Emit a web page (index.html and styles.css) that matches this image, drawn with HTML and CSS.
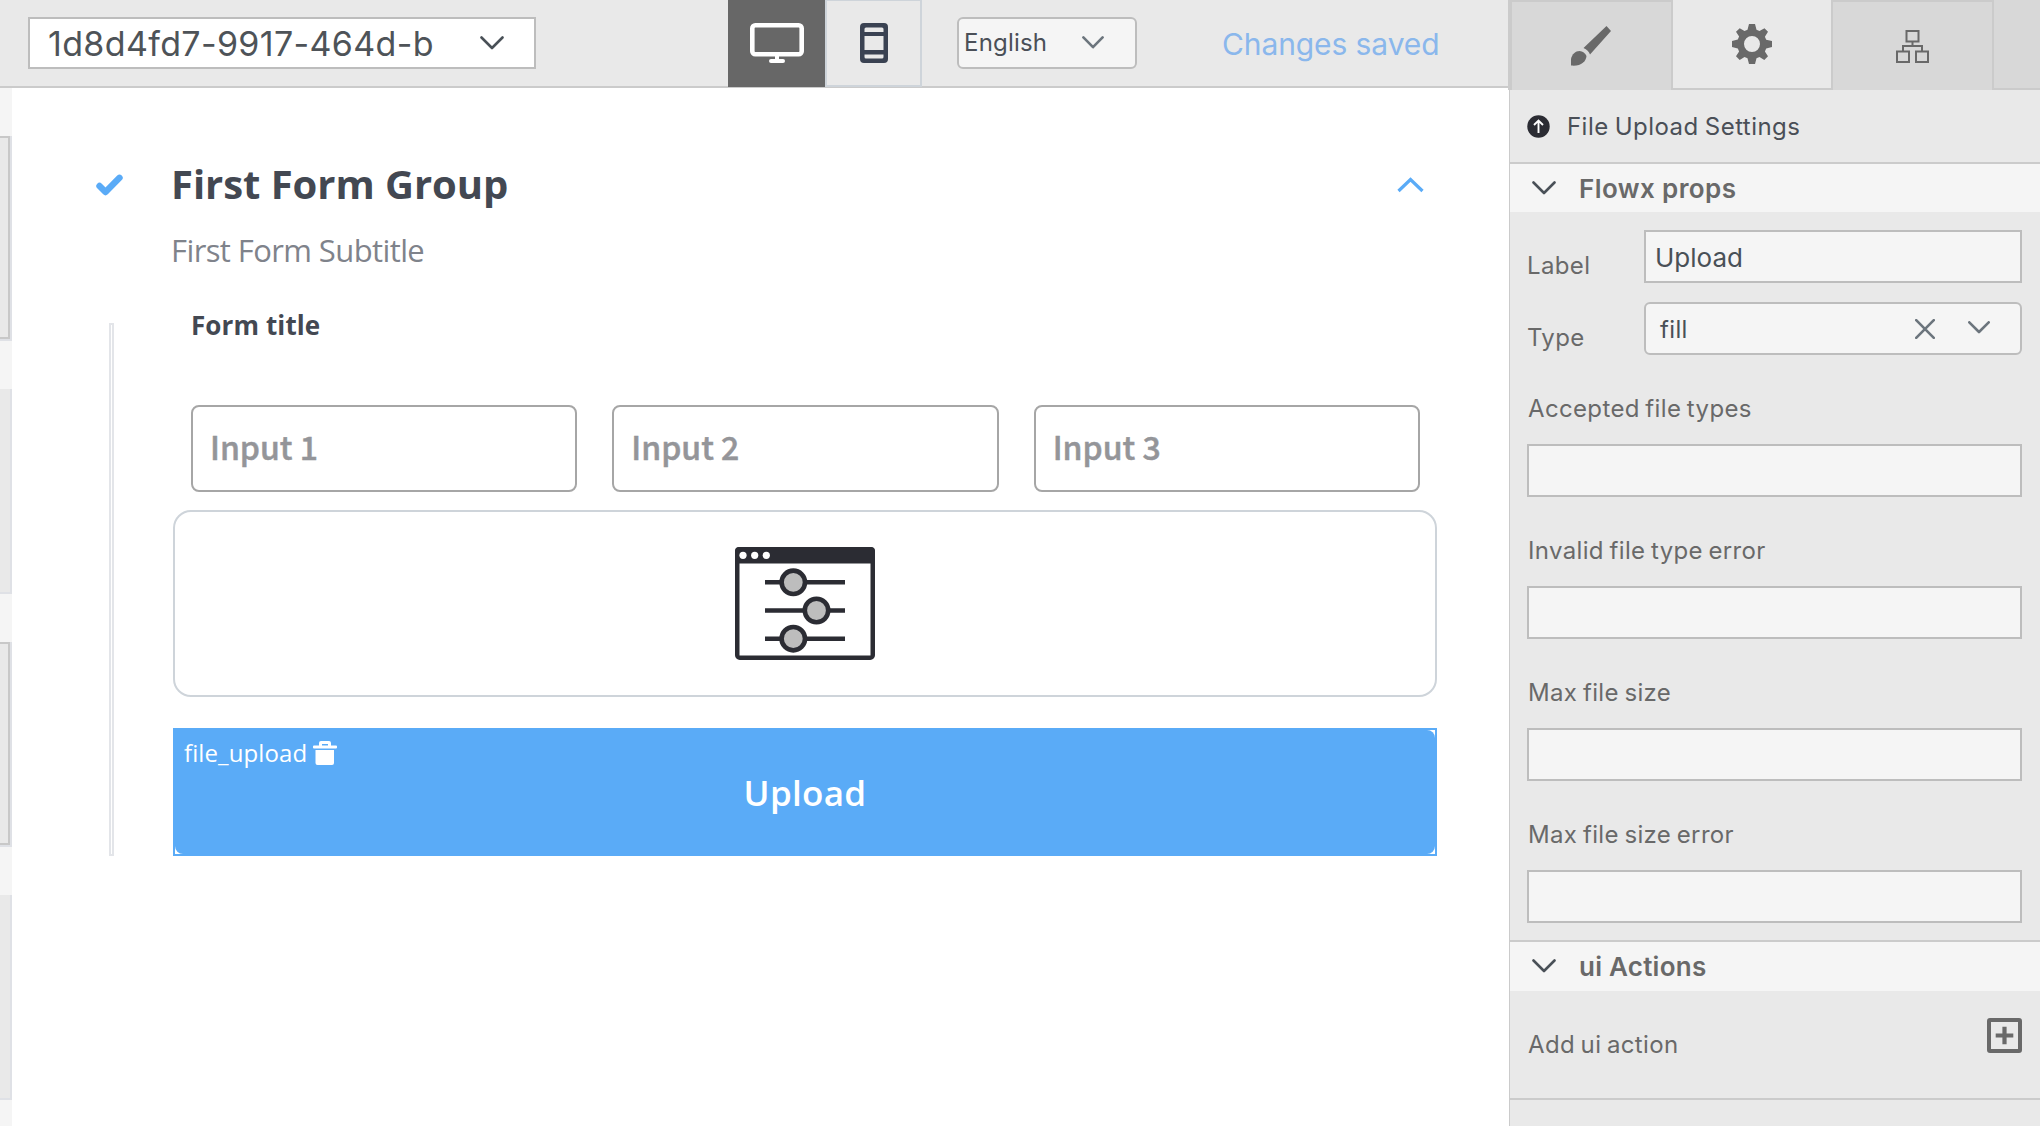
FILE: index.html
```html
<!DOCTYPE html>
<html lang="en">
<head>
<meta charset="utf-8">
<title>UI Designer</title>
<link rel="stylesheet" href="styles.css">
</head>
<body>
<div class="app">
  <div class="workspace">
    <header class="topbar">
      <div class="select template-select">
        <span>1d8d4fd7-9917-464d-b</span>
        <svg class="chev" width="24" height="14" viewBox="0 0 24 14"><path d="M1.5 1.5 12 12 22.500 1.500"/></svg>
      </div>
      <div class="devices">
        <div class="device on">
          <svg width="54" height="40" viewBox="0 0 54 40"><rect x="2.300" y="2.300" width="49.400" height="28.900" rx="3" fill="none" stroke="#fff" stroke-width="4.600"/><path d="M25 33h4v3h4a2 2 0 0 1 0 4H21a2 2 0 0 1 0-4h4z" fill="#fff"/></svg>
        </div>
        <div class="device off">
          <svg width="28" height="40" viewBox="0 0 28 40"><path fill-rule="evenodd" fill="#3a4252" d="M4 0h20a4 4 0 0 1 4 4v32a4 4 0 0 1-4 4H4a4 4 0 0 1-4-4V4a4 4 0 0 1 4-4zM6 4.500Q4.500 4.500 4.500 6V9h19V6Q23.500 4.500 22 4.500zM4.500 13v14h19V13zM4.500 31.500V34Q4.500 35.500 6 35.500H22Q23.500 35.500 23.500 34V31.500z"/></svg>
        </div>
      </div>
      <div class="select language-select">
        <span>English</span>
        <svg class="chev gray" width="22" height="13" viewBox="0 0 22 13"><path d="M1.400 1.400 11 11.200 20.600 1.400"/></svg>
      </div>
      <span class="status">Changes saved</span>
    </header>
    <div class="stage">
      <aside class="strip">
        <i class="gap"></i><i class="tile boxed"></i><i class="gap"></i><i class="tile"></i><i class="gap"></i><i class="tile boxed"></i><i class="gap"></i><i class="tile"></i><i class="gap last"></i>
      </aside>
      <main class="canvas">
        <div class="group-head">
          <svg class="check" width="27" height="22" viewBox="0 0 27 22"><path d="M3.500 12 9.500 18 23.500 3.800" fill="none" stroke="#5aabf7" stroke-width="6.400" stroke-linecap="round" stroke-linejoin="round"/></svg>
          <h1>First Form Group</h1>
          <svg class="caret" width="27" height="16" viewBox="0 0 27 16"><path d="M1.500 14 13.500 2.500 25.500 14" fill="none" stroke="#5aabf7" stroke-width="3.200"/></svg>
        </div>
        <p class="subtitle">First Form Subtitle</p>
        <div class="group-body">
          <div class="rail"></div>
          <div class="form">
            <h2>Form title</h2>
            <div class="inputs">
              <div class="input">Input 1</div>
              <div class="input">Input 2</div>
              <div class="input">Input 3</div>
            </div>
            <div class="custom">
              <svg width="140" height="113" viewBox="0 0 140 113">
                <rect x="2.250" y="2.250" width="135.500" height="108.500" rx="2.500" fill="#fff" stroke="#2b2c33" stroke-width="4.500"/>
                <path d="M4 0h132a4 4 0 0 1 4 4v12.500H0V4a4 4 0 0 1 4-4z" fill="#2b2c33"/>
                <g fill="#fff"><circle cx="8" cy="8.300" r="3.600"/><circle cx="19.700" cy="8.300" r="3.600"/><circle cx="31.300" cy="8.300" r="3.600"/></g>
                <g fill="#bdbdbd" stroke="#2b2c33" stroke-width="4.600"><path d="M30 35.300h80M30 63.500h80M30 91.700h80"/><circle cx="58.300" cy="35.300" r="11.700"/><circle cx="81.500" cy="63.500" r="11.700"/><circle cx="58.300" cy="91.700" r="11.700"/></g>
              </svg>
            </div>
            <div class="selected">
              <div class="upload">Upload</div>
              <div class="tag"><span>file_upload</span>
                <svg width="24" height="24" viewBox="0 0 24 24"><path fill="#fff" fill-rule="evenodd" d="M0 5V6.500Q0 7.500 1 7.500H23Q24 7.500 24 6.500V5.500Q24 4.500 23 4.500H18V2Q18 0 16 0H8Q6 0 6 2V4.500H1Q0 4.500 0 5.500zM9 3h6v1.500H9zM2.500 9h18.500v13a2 2 0 0 1-2 2H4.500a2 2 0 0 1-2-2z"/></svg>
              </div>
            </div>
          </div>
        </div>
      </main>
    </div>
  </div>
  <aside class="panel">
    <nav class="tabs">
      <div class="tab first"><svg width="40" height="40" viewBox="0 0 40 40" fill="#696969"><path d="M35.500 0 40 5 19 28.500Q17.500 24 12.500 22z"/><path d="M0 39.500V33C1 28 4.500 25 8.500 25q5 .5 7 5C15 36 9.500 40.500 0 39.500z"/></svg></div>
      <div class="tab active"><svg width="40" height="40" viewBox="0 0 40 40"><path fill="#696969" fill-rule="evenodd" d="M17 0h6l1.500 5.800 3 1.300L32.500 4.200 36 7.800 32.900 12.700 34.200 15.700 40 17v6l-5.800 1.500-1.300 3 3.100 4.800-3.700 3.700-4.800-3-3 1.200L23 40h-6l-1.500-5.800-3-1.200-4.800 3L4 32.300 7.100 27.500l-1.300-3L0 23v-6l5.800-1.500 1.300-3L4 7.800 7.700 4.200l4.800 2.900 3-1.300zM20 12a8 8 0 1 0 0 16 8 8 0 0 0 0-16z"/></svg></div>
      <div class="tab third"><svg width="33" height="33" viewBox="0 0 33 33"><path fill="none" stroke="#696969" stroke-width="2" d="M10.500 1h12v10.500h-12zM1 21.500h12V32H1zM20 21.500h12V32H20zM16.500 11.500V16M7 21.500V16h19v5.500"/></svg></div>
      <div class="tab-fill"></div>
    </nav>
    <div class="panel-title">
      <svg width="23" height="23" viewBox="0 0 23 23"><circle cx="11.500" cy="11.500" r="11.200" fill="#2b2c33"/><path d="M11.500 18V6M7 10 11.500 5.500 16 10" fill="none" stroke="#fff" stroke-width="1.900"/></svg>
      <span>File Upload Settings</span>
    </div>
    <div class="section-head"><svg class="chev" width="24" height="14" viewBox="0 0 24 14"><path d="M1.500 1.500 12 12 22.500 1.500"/></svg><span>Flowx props</span></div>
    <div class="props">
      <div class="prop"><label>Label</label><div class="field value">Upload</div></div>
      <div class="prop type"><label>Type</label><div class="field pick"><span>fill</span>
        <svg class="chev gray" width="20" height="20" viewBox="0 0 20 20"><path d="M1.200 1.200 18.800 18.800M18.800 1.200 1.200 18.800"/></svg>
        <svg class="chev gray down" width="22" height="13" viewBox="0 0 22 13"><path d="M1.300 1.300 11 11 20.700 1.300"/></svg></div></div>
      <div class="stacked"><label>Accepted file types</label><div class="field"></div></div>
      <div class="stacked"><label>Invalid file type error</label><div class="field"></div></div>
      <div class="stacked"><label>Max file size</label><div class="field"></div></div>
      <div class="stacked"><label>Max file size error</label><div class="field"></div></div>
    </div>
    <div class="section-head actions"><svg class="chev" width="24" height="14" viewBox="0 0 24 14"><path d="M1.500 1.500 12 12 22.500 1.500"/></svg><span>ui Actions</span></div>
    <div class="add"><span>Add ui action</span>
      <svg width="35" height="35" viewBox="0 0 35 35" fill="none" stroke="#696969"><rect x="2" y="2" width="31" height="31" rx="1" stroke-width="4"/><path d="M17.500 8.700v17.600M8.700 17.500h17.600" stroke-width="4.200"/></svg>
    </div>
  </aside>
</div>
</body>
</html>
```
FILE: styles.css
```css
* { box-sizing: border-box; margin: 0; padding: 0; }
body { font-family: Inter, "Liberation Sans", sans-serif; background: #fff; color: #4a4f57; overflow: hidden; }
svg { display: block; flex: none; }
.app { display: flex; width: 2040px; height: 1126px; }
.workspace { width: 1509px; display: flex; flex-direction: column; flex: none; }

.topbar { height: 88px; background: #e9e9e9; border-bottom: 2px solid #cbcbcb; display: flex; align-items: flex-start; padding-left: 28px; }
.select { height: 52px; margin-top: 17px; border: 2px solid #bdbdbd; display: flex; align-items: center; white-space: nowrap; }
.chev { fill: none; stroke: #495057; stroke-width: 2.6; stroke-linecap: round; stroke-linejoin: round; }
.chev.gray { stroke: #6c757d; }
.template-select { width: 508px; background: #fff; padding-left: 18px; justify-content: space-between; padding-right: 30px; font-size: 34px; letter-spacing: .35px; color: #4e5358; }
.devices { display: flex; margin-left: 192px; }
.device { width: 97px; height: 87px; display: flex; justify-content: center; padding-top: 23px; }
.device.on { background: #676767; }
.device.off { border: 2px solid #ced4da; border-top-width: 1px; padding-top: 22px; }
.language-select { margin-left: 35px; width: 180px; border-radius: 6px; background: #f5f5f5; font-size: 24px; letter-spacing: .2px; padding: 0 31px 1px 5px; justify-content: space-between; }
.status { margin-left: 85px; margin-top: 24px; line-height: 40px; font-size: 30px; letter-spacing: -.1px; color: #8ab7ec; white-space: nowrap; }

.stage { flex: 1; display: flex; }
.strip { width: 12px; display: flex; flex-direction: column; }
.gap { height: 48px; background: #f5f5f5; flex: none; }
.gap.last { height: auto; flex: 1; }
.tile { height: 205px; background: #e9e9e9; border: solid #dfe1e6; border-width: 0 2px 2px 0; flex: none; display: block; }
.boxed { box-shadow: inset -2px -2px #c8c8c8, inset 0 2px #c8c8c8; }

.canvas { width: 1425px; padding: 71px 0 0 84px; font-family: "Open Sans", "Noto Sans", sans-serif; color: #434852; }
.group-head { display: flex; height: 50px; align-items: center; }
.check { margin: 2px 48px 0 0; }
h1 { font-size: 40px; line-height: 50px; font-weight: 700; letter-spacing: -.05px; white-space: nowrap; }
.caret { margin: 1px 13px 0 auto; }
.subtitle { margin: 21px 0 0 75px; font-size: 31px; letter-spacing: -.6px; line-height: 40px; color: #7f838b; }
.group-body { display: flex; margin: 53px 0 0 13px; height: 533px; }
.rail { width: 5px; border: 2px solid #e3e5e9; margin-right: 59px; flex: none; }
.form { width: 1264px; flex: none; }
h2 { font-size: 26px; letter-spacing: .1px; line-height: 30px; margin: -13px 0 0 18px; font-weight: 700; }
.inputs { display: flex; gap: 35px; margin: 65px 17px 18px 18px; }
.input { flex: 1; height: 87px; border: 2px solid #a6a6a6; border-radius: 8px; padding-left: 17px; line-height: 79px; font-family: "Noto Sans CJK SC", "Noto Sans", sans-serif; font-weight: 500; font-size: 32px; color: #949599; -webkit-text-stroke: .5px #949599; }
.custom { height: 187px; border: 2px solid #ced4da; border-radius: 18px; display: flex; justify-content: center; align-items: center; margin-bottom: 31px; }
.selected { position: relative; height: 128px; border: 2px solid #5aabf7; }
.upload { height: 124px; background: #5aabf7; border-radius: 8px; color: #fff; font-weight: 550; font-size: 35px; letter-spacing: .3px; line-height: 126px; text-align: center; }
.tag { position: absolute; left: 0; top: 0; padding-left: 9px; height: 46px; background: #5aabf7; color: #fff; font-size: 24px; letter-spacing: .1px; display: flex; align-items: center; gap: 6px; }
.tag span { padding-bottom: 2px; }

.panel { width: 531px; background: #e9e9e9; border-left: 1px solid #cbcbcb; }
.tabs { display: flex; height: 90px; margin-left: -2px; }
.tab { display: flex; justify-content: center; background: #d8d8d8; border: 0 solid #cbcbcb; border-top-width: 2px; }
.tab.first { width: 165px; border-left-width: 4px; border-right-width: 2px; padding: 24px 2px 0 0; }
.tab.active { width: 158px; background: #e9e9e9; border-width: 0 0 2px; padding-top: 24px; }
.tab.third { width: 163px; border-left-width: 2px; border-right-width: 2px; padding: 28px 1px 0 0; }
.tab-fill { flex: 1; background: #d8d8d8; border-bottom: 2px solid #cbcbcb; }
.panel-title { height: 72px; display: flex; align-items: center; padding-left: 17px; gap: 17px; font-size: 24px; letter-spacing: .45px; word-spacing: -1px; }
.section-head { height: 50px; border-top: 2px solid #cbcbcb; background: #f5f5f5; display: flex; align-items: center; padding-left: 22px; gap: 23px; font-size: 26px; font-weight: 600; color: #696969; letter-spacing: .4px; }
.section-head.actions { height: 51px; letter-spacing: .25px; padding-bottom: 1px; }
.props { height: 728px; padding: 18px 18px 0 17px; color: #696969; font-size: 24px; letter-spacing: .35px; word-spacing: -1.5px; }
.field { height: 53px; background: #f5f5f5; border: 2px solid #bdbdbd; color: #495057; }
.prop { display: flex; height: 72px; justify-content: space-between; }
.prop label { line-height: 71px; }
.prop .field { width: 378px; }
.prop .value { font-size: 26px; line-height: 52px; padding-left: 9px; letter-spacing: 0; }
.pick { border-radius: 6px; display: flex; align-items: center; padding: 1px 0 0 14px; }
.pick span { flex: 1; padding-top: 1px; }
.down { margin: 0 30px 4px 33px; }
.stacked { height: 142px; }
.stacked label { display: block; height: 70px; line-height: 70px; padding-left: 1px; }
.add { height: 109px; border-bottom: 2px solid #cbcbcb; display: flex; justify-content: space-between; padding: 27px 18px 0; font-size: 24px; color: #696969; letter-spacing: .35px; word-spacing: -1.5px; }
.add span { line-height: 54px; }
```
